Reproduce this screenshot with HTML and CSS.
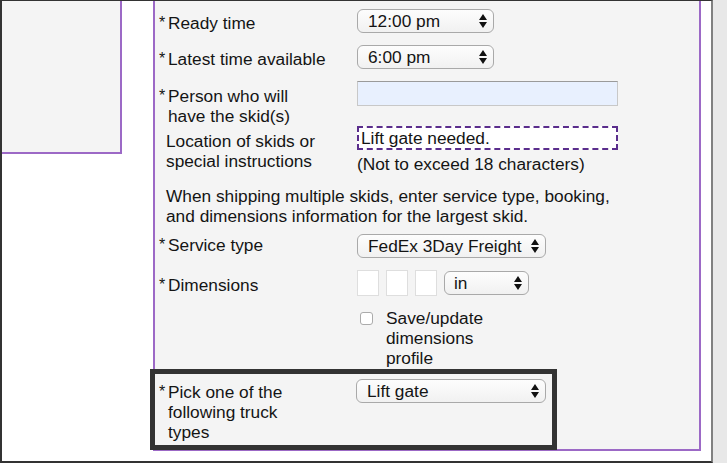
FILE: index.html
```html
<!DOCTYPE html>
<html>
<head>
<meta charset="utf-8">
<link rel="stylesheet" href="styles.css">
</head>
<body>
<div class="page">
  <div class="frame">
    <div class="side"></div>
    <div class="main">
      <div class="row r-ready">
        <div class="label"><span class="req">*</span><span>Ready time</span></div>
        <div class="field">
          <div class="select w-time"><span>12:00 pm</span><svg class="arr" width="8" height="14" viewBox="0 0 8 14"><path d="M0 6 L4 0 L8 6Z M0 8 L8 8 L4 14Z" fill="#111"/></svg></div>
        </div>
      </div>
      <div class="row r-latest">
        <div class="label"><span class="req">*</span><span>Latest time available</span></div>
        <div class="field">
          <div class="select w-time"><span>6:00 pm</span><svg class="arr" width="8" height="14" viewBox="0 0 8 14"><path d="M0 6 L4 0 L8 6Z M0 8 L8 8 L4 14Z" fill="#111"/></svg></div>
        </div>
      </div>
      <div class="row r-person">
        <div class="label lab-pad4"><span class="req">*</span><span>Person who will<br>have the skid(s)</span></div>
        <div class="field">
          <div class="text-input filled"></div>
        </div>
      </div>
      <div class="row r-location">
        <div class="label lab-pad4 noreq"><span>Location of skids or<br>special instructions</span></div>
        <div class="field">
          <div class="text-input dashed">Lift gate needed.</div>
          <div class="note">(Not to exceed 18 characters)</div>
        </div>
      </div>
      <p class="info">When shipping multiple skids, enter service type, booking,<br>and dimensions information for the largest skid.</p>
      <div class="row r-service">
        <div class="label lab-pad2"><span class="req">*</span><span>Service type</span></div>
        <div class="field">
          <div class="select w-service"><span>FedEx 3Day Freight</span><svg class="arr" width="8" height="14" viewBox="0 0 8 14"><path d="M0 6 L4 0 L8 6Z M0 8 L8 8 L4 14Z" fill="#111"/></svg></div>
        </div>
      </div>
      <div class="row r-dims">
        <div class="label lab-pad4"><span class="req">*</span><span>Dimensions</span></div>
        <div class="field dims">
          <div class="dim"></div>
          <div class="dim"></div>
          <div class="dim"></div>
          <div class="select w-unit"><span>in</span><svg class="arr" width="8" height="14" viewBox="0 0 8 14"><path d="M0 6 L4 0 L8 6Z M0 8 L8 8 L4 14Z" fill="#111"/></svg></div>
        </div>
      </div>
      <div class="row r-check">
        <div class="label"></div>
        <div class="field check">
          <span class="box"></span>
          <span class="check-label">Save/update<br>dimensions<br>profile</span>
        </div>
      </div>
      <div class="row r-truck">
        <div class="label lab-pad8"><span class="req">*</span><span>Pick one of the<br>following truck<br>types</span></div>
        <div class="field">
          <div class="select w-truck"><span>Lift gate</span><svg class="arr" width="8" height="14" viewBox="0 0 8 14"><path d="M0 6 L4 0 L8 6Z M0 8 L8 8 L4 14Z" fill="#111"/></svg></div>
        </div>
      </div>
    </div>
  </div>
  <div class="rail"></div>
</div>
</body>
</html>
```
FILE: styles.css
```css
html, body {
  margin: 0;
  padding: 0;
  background: #ffffff;
}
body {
  font-family: "Liberation Sans", Arial, sans-serif;
  font-size: 17.3px;
  line-height: 20px;
  color: #141414;
}
.page {
  display: flex;
  width: 727px;
  height: 463px;
  overflow: hidden;
}
.frame {
  width: 709px;
  height: 460px;
  border-top: 1px solid #333;
  border-left: 2px solid #333;
  border-bottom: 2px solid #333;
  border-right: 2px solid #808080;
  display: flex;
  align-items: flex-start;
  background: #ffffff;
}
.rail {
  flex: 1;
  background: #e8e8e8;
}
.side {
  width: 118px;
  height: 151px;
  background: #f4f4f4;
  border-right: 2px solid #9c69c6;
  border-bottom: 2px solid #9c69c6;
}
.main {
  margin-left: 31px;
  width: 544px;
  background: #f4f4f4;
  border-left: 2px solid #9c69c6;
  border-right: 2px solid #9c69c6;
  border-bottom: 2px solid #9c69c6;
  padding: 8px 0 4px 0;
  display: flex;
  flex-direction: column;
}
.row {
  display: grid;
  grid-template-columns: 202px 1fr;
}
.label {
  display: flex;
  padding-left: 4px;
  padding-top: 4px;
  white-space: nowrap;
}
.label.noreq {
  padding-left: 11px;
}
.lab-pad2 { padding-top: 1px; }
.lab-pad4 { padding-top: 5px; }
.lab-pad8 { padding-top: 8px; }
.req {
  width: 9px;
  flex: none;
  font-size: 16px;
}
.field {
  display: flex;
  flex-direction: column;
  align-items: flex-start;
}
.select {
  box-sizing: border-box;
  height: 24px;
  border: 1px solid #a9a9a9;
  border-radius: 6px;
  background: linear-gradient(#fdfdfd, #f1f1f1);
  display: flex;
  align-items: center;
  justify-content: space-between;
  padding: 0 6px 0 10px;
}
.select span {
  line-height: 20px;
  margin-top: -1px;
}
.arr {
  flex: none;
}
.w-time { width: 137px; }
.w-service { width: 189px; }
.w-unit { width: 85px; padding-left: 9px; }
.w-truck { width: 190px; margin-left: -1px; }

.r-latest { margin-top: 12px; }
.r-person { margin-top: 12px; }
.text-input {
  box-sizing: border-box;
  width: 261px;
  height: 25px;
  line-height: 21px;
}
.text-input.filled {
  background: #e8f0fe;
  border: 1px solid #c8c8c8;
  border-top-color: #9a9a9a;
}
.text-input.dashed {
  height: 24px;
  background: #ffffff;
  border: 2px dashed #5a2d8c;
  padding-left: 2px;
}
.note {
  margin-top: 4px;
}
.info {
  margin: 12px 0 0 0;
  padding-left: 11px;
}
.r-service { margin-top: 8px; }
.r-dims { margin-top: 12px; }
.dims {
  flex-direction: row;
  align-items: center;
  gap: 7px;
}
.dim {
  box-sizing: border-box;
  width: 22px;
  height: 26px;
  background: #ffffff;
  border: 1px solid #dedede;
}
.r-check { margin-top: 12px; }
.check {
  flex-direction: row;
  align-items: flex-start;
}
.check-label {
  padding-top: 0;
}
.box {
  box-sizing: border-box;
  width: 13px;
  height: 13px;
  margin: 4px 13px 0 3px;
  border: 1px solid #ababab;
  border-radius: 3px;
  background: #ffffff;
}
.r-truck {
  margin-top: 6px;
  width: 397px;
  padding-bottom: 3px;
  outline: 5px solid #333333;
}
.r-truck .field {
  padding-top: 5px;
}
```
